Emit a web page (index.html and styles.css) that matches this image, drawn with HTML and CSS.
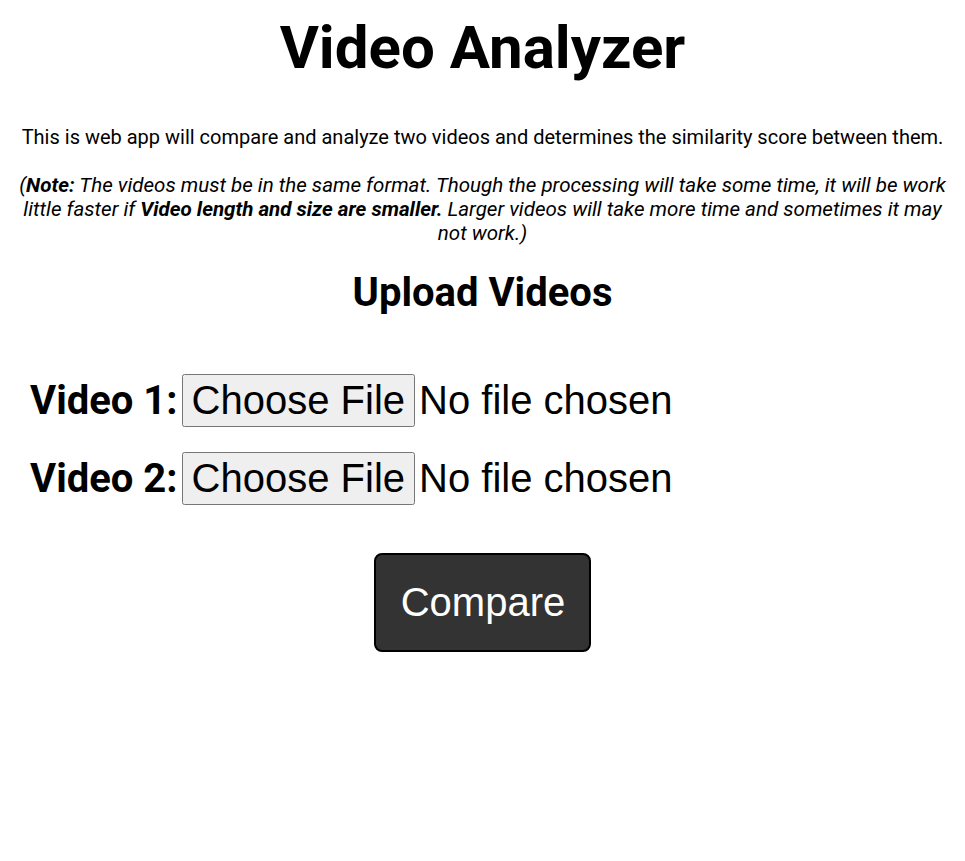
FILE: index.html
```html
<!DOCTYPE html>
<html>
<head>
<meta charset="utf-8">
<link rel="stylesheet" href="styles.css">
</head>
<body>
<h1 class="title">Video Analyzer</h1>
<p class="intro">This is web app will compare and analyze two videos and determines the similarity score between them.</p>
<p class="note">(<b>Note:</b> The videos must be in the same format. Though the processing will take some time, it will be work little faster if <b>Video length and size are smaller.</b> Larger videos will take more time and sometimes it may not work.)</p>
<h2 class="subtitle">Upload Videos</h2>
<form class="upload">
  <div class="row"><label class="label">Video 1:</label><input class="file" type="file"></div>
  <div class="row"><label class="label">Video 2:</label><input class="file" type="file"></div>
  <div class="actions"><button class="compare" type="button">Compare</button></div>
</form>
</body>
</html>
```
FILE: styles.css
```css
body {
  margin: 8px;
  font-family: Roboto, "Liberation Sans", sans-serif;
  color: #000;
  background: #fff;
  text-align: center;
}
.title {
  font-size: 60px;
  font-weight: 700;
  margin: 4px 0 0;
}
.intro {
  font-size: 20px;
  line-height: 24px;
  margin: 42px 0 0;
}
.note {
  font-size: 20.55px;
  line-height: 24px;
  font-style: italic;
  margin: 24px 0 0;
  padding: 0 8px;
}
.subtitle {
  font-size: 40px;
  font-weight: 700;
  margin: 24px 0 0;
}
.upload {
  text-align: left;
  padding: 58px 22px 0;
  display: flex;
  flex-direction: column;
  gap: 25px;
}
.row {
  display: flex;
  align-items: center;
  gap: 4px;
}
.label {
  font-size: 40px;
  font-weight: 700;
  white-space: nowrap;
  flex-shrink: 0;
}
.file {
  font-family: "Liberation Sans", Arial, sans-serif;
  font-size: 40px;
}
.file::file-selector-button {
  padding: 2px 8px;
}
.actions {
  display: flex;
  justify-content: center;
  padding-top: 23px;
}
.compare {
  font-family: "Liberation Sans", Arial, sans-serif;
  font-size: 40px;
  color: #fff;
  background: #333;
  border: 2px solid #000;
  border-radius: 8px;
  padding: 25px 24px 25px 25px;
}
```
